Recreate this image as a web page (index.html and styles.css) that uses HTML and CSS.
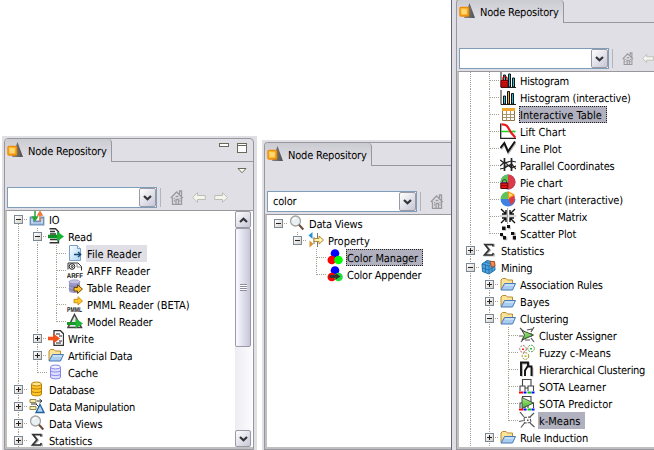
FILE: index.html
```html
<!DOCTYPE html>
<html lang="en">
<head>
<meta charset="utf-8">
<title>Node Repository</title>
<link rel="stylesheet" href="styles.css">
</head>
<body>
<svg class="defs" aria-hidden="true">
<defs>
<linearGradient id="gOrange" x1="0" y1="0" x2="1" y2="1"><stop offset="0" stop-color="#ffd95a"/><stop offset="1" stop-color="#f59a12"/></linearGradient>
<linearGradient id="gGray" x1="0" y1="0" x2="1" y2="0"><stop offset="0" stop-color="#8a8a8a"/><stop offset="1" stop-color="#4e4e4e"/></linearGradient>
<linearGradient id="gDoc" x1="0" y1="0" x2="1" y2="1"><stop offset="0" stop-color="#fff"/><stop offset="1" stop-color="#a9d2f4"/></linearGradient>
<linearGradient id="gGreen" x1="0" y1="0" x2="0" y2="1"><stop offset="0" stop-color="#b6f08c"/><stop offset="1" stop-color="#3cae2c"/></linearGradient>
<symbol id="knime" viewBox="0 0 16 16"><path d="M10.500 0 16 15H5Z" fill="url(#gGray)"/><rect x="1" y="4.500" width="8.500" height="8.500" rx="1" fill="url(#gOrange)" stroke="#f08a00" stroke-width="1.400"/><rect x="2.800" y="6.300" width="5" height="5" fill="#ffd873"/></symbol>
<symbol id="home" viewBox="0 0 14 15"><path d="M.8 8 6.500 2 12.800 8M2.500 7.500v7h9v-7M9.500 4V1h2v5M6 14V9.500h2.500V14M4 8.500h1M9.500 8.500h1M5.500 6.500h3M4 11h1M9.500 11h1" fill="none" stroke="#9a9a9e" stroke-width="1.300"/></symbol>
<symbol id="back" viewBox="0 0 14 11"><path d="M.7 5.500 5.500.7v2.800h7.800v4H5.500v2.800Z" fill="#f5f5ee" stroke="#bcbcb6"/></symbol>
<symbol id="fwd" viewBox="0 0 14 11"><path d="M13.300 5.500 8.500.7v2.800H.7v4h7.800v2.800Z" fill="#f5f5ee" stroke="#bcbcb6"/></symbol>
<symbol id="chev" viewBox="0 0 9 6"><path d="M1 1 4.500 4.300 8 1" fill="none" stroke="#33333b" stroke-width="2.200"/></symbol>
<symbol id="io" viewBox="0 0 16 16"><path d="M4 6.500H1.500v7h13v-7H12M4.500 6.500v4h7v-4" fill="none" stroke="#6e93bd" stroke-width="1.800"/><path d="M2 12.500h12" stroke="#a8c4e4" stroke-width="1.500"/><path d="M6 0v8M3.800 6 6 9.300 8.200 6Z" stroke="#27a536" stroke-width="1.500" fill="#27a536"/><path d="M11 10V3M9 4 11 .8 13 4Z" stroke="#f0763a" stroke-width="1.500" fill="#f0763a"/></symbol>
<symbol id="read" viewBox="0 0 16 16"><path d="M1.500.8h6l3 3v11h-9M2 3.500h5M2 6h6M2 11.500h7" fill="none" stroke="#333" stroke-width="1.400"/><path d="M0 8.500h9" stroke="#0d8f22" stroke-width="3.500"/><path d="M9 3.200 16 8.500 9 13.800Z" fill="#19b532"/></symbol>
<symbol id="write" viewBox="0 0 16 16"><path d="M6 .7h6.500l3 3V15.300H6Z" fill="#fff" stroke="#333" stroke-width="1.300"/><path d="M8 4h4M11 6h3M11 11h3M8 13h5" stroke="#222"/><path d="M0 8.500h6" stroke="#f2511b" stroke-width="3.600"/><path d="M5.500 3.500 12 8.500 5.500 13.500Z" fill="#f2511b"/></symbol>
<symbol id="file" viewBox="0 0 16 16"><path d="M2.500.5h8l3 3v12h-11Z" fill="url(#gDoc)" stroke="#7c9fc8"/><path d="M10.500.5v3h3" fill="#fff" stroke="#7c9fc8"/><path d="M7 9.500h6M11 7l2.800 2.500L11 12" fill="none" stroke="#174a73" stroke-width="1.300"/></symbol>
<symbol id="arff" viewBox="0 0 16 16"><path d="M1 7.500V1h10l3.500 3.500v4" fill="#fff" stroke="#333"/><circle cx="5" cy="4.500" r="2.800" fill="#fff" stroke="#222"/><circle cx="5.200" cy="4.500" r="1" fill="none" stroke="#222"/><path d="M10 1.500v3.500h4" fill="none" stroke="#888"/><text x="-.2" y="15.800" class="tiny" textLength="16.200" lengthAdjust="spacingAndGlyphs">ARFF</text></symbol>
<symbol id="table" viewBox="0 0 16 16"><path d="M2 2.500v9.500c0 2.500 11 2.500 11 0V2.500Z" fill="#9a9ac6"/><ellipse cx="7.500" cy="2.800" rx="5.500" ry="2" fill="#c3c3e2" stroke="#8585b4" stroke-width=".6"/><path d="M2 6c0 2 11 2 11 0M2 9.500c0 2 11 2 11 0" fill="none" stroke="#8080b0"/><path d="M7 8.500h3.500V5.800L15.500 10l-5 4.500V12H7Z" fill="#ffc12a" stroke="#5d3b05" stroke-width=".9"/></symbol>
<symbol id="pmml" viewBox="0 0 16 16"><path d="M7 3.300h4V.8L15.500 5 11 9V6.800H7Z" fill="#ffc62b" stroke="#c98a06" stroke-width=".9"/><text x="0" y="15.500" class="tiny" textLength="15" lengthAdjust="spacingAndGlyphs">PMML</text></symbol>
<symbol id="model" viewBox="0 0 16 16"><path d="M7.500 1.500 14.500 14.500H1Z" fill="#e6e6e6" stroke="#444" stroke-width="1.500"/><path d="M0 10.500h9" stroke="#159a2a" stroke-width="3"/><path d="M8.500 5.500 16 10.500 8.500 15.500Z" fill="#1fb436"/></symbol>
<symbol id="folder" viewBox="0 0 16 16"><path d="M1 13.500V4L2.500 2.500H6L7.500 4H12.500V8" fill="#fce39a" stroke="#b98a2e"/><path d="M1 14 4.500 7.500H15.500L12.500 14Z" fill="#a9ccf0" stroke="#4779b5"/><path d="M5 9h9" stroke="#e4f1ff"/></symbol>
<symbol id="cache" viewBox="0 0 16 16"><path d="M2.500 3v10c0 2.500 10 2.500 10 0V3" fill="#e0e0ff" stroke="#8484ee"/><ellipse cx="7.500" cy="3" rx="5" ry="2" fill="#f2f2ff" stroke="#8484ee"/><path d="M2.500 6.500c0 2 10 2 10 0M2.500 10c0 2 10 2 10 0" fill="none" stroke="#8484ee"/></symbol>
<symbol id="db" viewBox="0 0 16 16"><path d="M2.500 3v10c0 2.500 10 2.500 10 0V3" fill="#ffc629" stroke="#b97d04"/><ellipse cx="7.500" cy="3" rx="5" ry="2" fill="#ffe68e" stroke="#b97d04"/><path d="M2.500 6.500c0 2 10 2 10 0M2.500 10c0 2 10 2 10 0" fill="none" stroke="#b97d04"/></symbol>
<symbol id="manip" viewBox="0 0 16 16"><path d="M1 1.500h6v3H1ZM1 8.500h6v3H1Z" fill="#f8edb0" stroke="#96884c"/><path d="M8 3h4M10.500 1l2.500 2-2.500 2M7 6l4 4M2 6h6" fill="none" stroke="#333"/><path d="M11 6.500 15 14.500H7Z" fill="#b4d5f2" stroke="#1f5f9c" stroke-width="1.300"/></symbol>
<symbol id="views" viewBox="0 0 16 16"><circle cx="6.500" cy="6" r="5" fill="#e9f0f3" stroke="#a3a3a3" stroke-width="1.300"/><path d="M4 5a3 3 0 0 1 3-2" fill="none" stroke="#fff" stroke-width="1.500"/><path d="M10 9.800 14.300 14.500" stroke="#6b4a3a" stroke-width="2"/></symbol>
<symbol id="stats" viewBox="0 0 16 16"><path d="M13 5V3H4.500L9 8.300 4.500 13.500H13V11.500" fill="none" stroke="#bbb" stroke-width="2"/><path d="M11.800 4.500V2.500H4L8 7.700 3.500 13H11.500l.8-2" fill="none" stroke="#333" stroke-width="1.700"/></symbol>
<symbol id="prop" viewBox="0 0 16 16"><path d="M4.500 0v7L.5 3.500Z" fill="#2494cf"/><path d="M1.500 8.500v7l4-3.500Z" fill="#d89429"/><path d="M9.500 1v14M6 5v7" stroke="#777"/><path d="M6 6.500h5V4l4.500 4L11 12V9.500H6Z" fill="#fff1ba" stroke="#b98a2e"/></symbol>
<symbol id="color" viewBox="0 0 16 16"><circle cx="8" cy="4.500" r="4.300" fill="#00f"/><circle cx="4.800" cy="11" r="4.300" fill="#f00"/><circle cx="11.500" cy="11" r="4.300" fill="#0f0"/></symbol>
<symbol id="append" viewBox="0 0 16 16"><circle cx="8" cy="4.500" r="4.300" fill="#00f"/><circle cx="4.800" cy="11" r="4.300" fill="#f00"/><circle cx="11.500" cy="11" r="4.300" fill="#1fe03a"/><path d="M2.500 9h6V7l5 3.500-5 3.300V12h-6Z" fill="#333"/></symbol>
<symbol id="hist" viewBox="0 0 16 16"><path d="M1 0v15.500h15" fill="none" stroke="#222"/><path d="M3.500 3h2v12h-2ZM8.500 2h2v13h-2ZM12.500 6h2v9h-2Z" fill="#1cc8d8" stroke="#111"/><path d="M3 8V6.500C3 4 7 4 7 6.500V8" fill="none" stroke="#b00" stroke-width="1.300"/><path d="M1 8.500h7v6.500H1Z" fill="#e01818" stroke="#700"/><path d="M1 10.800h7M1 13h7" stroke="#900"/></symbol>
<symbol id="histi" viewBox="0 0 16 16"><path d="M1 1v14.500h15" fill="none" stroke="#222"/><path d="M3.500 7h2v8h-2Z" fill="#1cc8d8" stroke="#111"/><path d="M7.500 2.500h2V15h-2Z" fill="#f5a623" stroke="#111"/><path d="M11.500 4.500h2V15h-2Z" fill="#1cc8d8" stroke="#111"/></symbol>
<symbol id="itable" viewBox="0 0 16 16"><path d="M2.500 2.500h12v12h-12Z" fill="#fff" stroke="#8f7440"/><path d="M2 2h13v3H2Z" fill="#f2a62c"/><path d="M2.500 8.500h12M2.500 11.500h12M6.500 5v9.500M10.500 5v9.500" stroke="#a8936a"/></symbol>
<symbol id="lift" viewBox="0 0 16 16"><path d="M.7.5v15H16" fill="none" stroke="#222" stroke-width="1.300"/><path d="M1 8.500h14.500" stroke="#26cc26" stroke-width="1.700"/><path d="M1.500 1.300C8 1 8 5 11 9.500L15.300 14.500" fill="none" stroke="#f01818" stroke-width="2.200"/></symbol>
<symbol id="line" viewBox="0 0 16 16"><path d="M1 9 4.500 4 8.500 12.500 15.500 2.500" fill="none" stroke="#bbb" stroke-width="2.500"/><path d="M.5 8 4.300 3 8 11.500 15 1.500" fill="none" stroke="#111" stroke-width="1.900"/></symbol>
<symbol id="par" viewBox="0 0 16 16"><path d="M4.500 1v13M11.500 1v13" stroke="#222" stroke-width="1.700"/><path d="M0 3 4.500 6 11.500 4 16 5M0 9 4.500 5 11.500 11 16 9M0 12 4.500 11 11.500 7 16 12M4 9h8" fill="none" stroke="#222" stroke-width="1.200"/></symbol>
<symbol id="pie" viewBox="0 0 16 16"><circle cx="8" cy="8" r="7.500" fill="#4b7fdc"/><path d="M8 8V.5A7.500 7.500 0 0 0 .5 8Z" fill="#5fc35a"/><path d="M8 .5a7.500 7.500 0 0 1 0 15Z" fill="#da3b45"/><path d="M2.500 8.500V7.500c0-2.500 4-2.500 4 0V9" fill="none" stroke="#333"/><path d="M.8 9h7v5.500h-7Z" fill="#e01818" stroke="#600"/><path d="M1 11.700h6.500" stroke="#900"/></symbol>
<symbol id="piei" viewBox="0 0 16 16"><path d="M.5 8a7.500 7.500 0 0 0 15 0Z" fill="#3f80e4"/><path d="M8 8V.5A7.500 7.500 0 0 0 .5 8Z" fill="#5fc35a"/><path d="M8.500 8 13 2.500A7.500 7.500 0 0 1 11 14Z" fill="#da3b45"/><path d="M8.500 7V1L14 4Z" fill="#ffe08a" stroke="#f39a12" stroke-width="1.200"/></symbol>
<symbol id="smat" viewBox="0 0 16 16"><path d="M7.500 0v16M0 8h16" stroke="#999" stroke-width=".8"/><path d="M1 1 6 6M6 2v4H2M15 1 10 6M10 2v4h4M1 15 6 10M2 10h4v4M15 15 10 10M14 10h-4v4" fill="none" stroke="#111" stroke-width="1.400"/></symbol>
<symbol id="splot" viewBox="0 0 16 16"><path d="M2 1.500h3.500v3.500H2ZM7 .5h3v3H7ZM0 9h3v2.500H0ZM3 11h3.500v3.500H3ZM12 7h3v3h-3ZM13 11h2.500v3.500H13Z" fill="#bbb" transform="translate(.8 .8)"/><path d="M2 1.500h3.500v3.500H2ZM7 0h3v3H7ZM0 8h3v3H0ZM3 11h3v3.500H3ZM11 7h3.300v3H11ZM12.800 11H16v3.500h-3.200Z" fill="#111"/></symbol>
<symbol id="mining" viewBox="0 0 16 16"><path d="M1 5 6 1.500 13.500 3 14 11 8 15 1.500 12.500Z" fill="#4ea3dc" stroke="#226fa8"/><path d="M1 5 8 7 13.500 3M8 7v8M1 8.800 8 11l6-4M4.500 6v7.500M11 5v8M4 3l7 2" fill="none" stroke="#226fa8" stroke-width=".9"/><path d="M9 2.500 13.500 2.500 14 7 10.500 8Z" fill="#f28a4e" stroke="#b24b19" stroke-width=".8"/></symbol>
<symbol id="assign" viewBox="0 0 16 16"><path d="M1 1 5 5M8 3 13 2M15 0 12 5M0 9h4M2 15 5 11M15 15 12 11M6 13h5M12 6v4" stroke="#555" stroke-width="1.200"/><path d="M3 3.500 14.500 8 3 13 5.500 8Z" fill="url(#gGreen)" stroke="#333" stroke-width=".9"/></symbol>
<symbol id="fuzzy" viewBox="0 0 16 16"><g fill="none" stroke-dasharray="2 1"><circle cx="4" cy="5" r="3.300" stroke="#b06060"/><circle cx="12" cy="4.500" r="3.300" stroke="#5a9a50"/><circle cx="6.500" cy="12" r="3.300" stroke="#8a8a30"/></g><path d="M3 4.500h2v1.500H3Z" fill="#f22"/><path d="M11 4h2v1.500h-2Z" fill="#2c2"/><path d="M5.500 11.500h2V13h-2Z" fill="#bb0"/></symbol>
<symbol id="hier" viewBox="0 0 16 16"><path d="M3 15.500V2.500H10V6M13.500 15.500V6.500" fill="none" stroke="#aaa" stroke-width="1.800"/><path d="M2 15V1.500H9V5.500M6 15V9.500L8.500 5.500H12.500V15" fill="none" stroke="#111" stroke-width="1.900"/></symbol>
<symbol id="sota" viewBox="0 0 16 16"><path d="M3.500 5V1.500H12V5M1 13V8h5v5M3.500 8V5M9 13V8h5.500v5M12 8V4M6 10h3" fill="none" stroke="#444" stroke-width="1.100"/><path d="M0 13.500h4v2H0Z" fill="#f00"/><path d="M4.500 13.500h3v2h-3ZM12.500 13.500h3v2h-3Z" fill="#00f"/><path d="M8.500 13.500h3.500v2H8.500Z" fill="#0c0"/></symbol>
<symbol id="sotap" viewBox="0 0 16 16"><use href="#sota"/><path d="M3 2.500 14.500 8 3 13.500Z" fill="url(#gGreen)" stroke="#333" stroke-width=".8"/></symbol>
<symbol id="kmeans" viewBox="0 0 16 16"><path d="M1 0 5 5M15 1 11 5M0 9.500 4.500 8.500M2 15.500 5.500 11M15.500 15 11 11" stroke="#555" stroke-width="1.200" fill="none"/><path d="M5 5.500 11 5 12 10.500 5.500 11Z" fill="none" stroke="#555" stroke-width="1.100" stroke-dasharray="3 1"/><path d="M8 7.500h1.500V9H8Z" fill="#555"/></symbol>
</defs>
</svg>

<section class="panel left">
 <div class="view">
  <header class="tabs"><div class="tab"><svg class="ico"><use href="#knime"/></svg><span>Node Repository</span></div>
   <div class="strip"><i class="min"></i><i class="max"></i></div></header>
  <div class="tools">
   <div class="menu"><svg class="tri" viewBox="0 0 10 6"><path d="M1 .5H9L5 4.700Z" fill="#fff" stroke="#6b6a58"/></svg></div>
   <div class="bar"><div class="combo"><span></span><b><svg><use href="#chev"/></svg></b></div><i class="sep"></i><svg class="home"><use href="#home"/></svg><svg class="arrow"><use href="#back"/></svg><svg class="arrow"><use href="#fwd"/></svg></div>
  </div>
  <div class="content">
   <ul class="tree">
    <li><i class="g s x minus"></i><svg class="ico"><use href="#io"/></svg><span>IO</span></li>
    <li><i class="g v"></i><i class="g t x minus"></i><svg class="ico"><use href="#read"/></svg><span>Read</span></li>
    <li><i class="g v"></i><i class="g v"></i><i class="g t"></i><svg class="ico"><use href="#file"/></svg><span class="soft loose">File Reader</span></li>
    <li><i class="g v"></i><i class="g v"></i><i class="g t"></i><svg class="ico"><use href="#arff"/></svg><span class="loose">ARFF Reader</span></li>
    <li><i class="g v"></i><i class="g v"></i><i class="g t"></i><svg class="ico"><use href="#table"/></svg><span class="loose">Table Reader</span></li>
    <li><i class="g v"></i><i class="g v"></i><i class="g t"></i><svg class="ico"><use href="#pmml"/></svg><span class="loose">PMML Reader (BETA)</span></li>
    <li><i class="g v"></i><i class="g v"></i><i class="g e"></i><svg class="ico"><use href="#model"/></svg><span>Model Reader</span></li>
    <li><i class="g v"></i><i class="g t x plus"></i><svg class="ico"><use href="#write"/></svg><span class="loose">Write</span></li>
    <li><i class="g v"></i><i class="g t x plus"></i><svg class="ico"><use href="#folder"/></svg><span>Artificial Data</span></li>
    <li><i class="g v"></i><i class="g e"></i><svg class="ico"><use href="#cache"/></svg><span>Cache</span></li>
    <li><i class="g t x plus"></i><svg class="ico"><use href="#db"/></svg><span>Database</span></li>
    <li><i class="g t x plus"></i><svg class="ico"><use href="#manip"/></svg><span class="tight">Data Manipulation</span></li>
    <li><i class="g t x plus"></i><svg class="ico"><use href="#views"/></svg><span>Data Views</span></li>
    <li><i class="g t x plus"></i><svg class="ico"><use href="#stats"/></svg><span>Statistics</span></li>
   </ul>
   <div class="scroll"><b><svg class="up"><use href="#chev"/></svg></b><div class="thumb"><i></i></div><b class="end"><svg><use href="#chev"/></svg></b></div>
  </div>
 </div>
</section>

<section class="panel middle">
 <div class="view">
  <header class="tabs"><div class="tab"><svg class="ico"><use href="#knime"/></svg><span>Node Repository</span></div><div class="strip"></div></header>
  <div class="tools">
   <div class="menu"></div>
   <div class="bar"><div class="combo"><span>color</span><b><svg><use href="#chev"/></svg></b></div><i class="sep"></i><svg class="home"><use href="#home"/></svg></div>
  </div>
  <div class="content">
   <ul class="tree">
    <li><i class="g x minus"></i><svg class="ico"><use href="#views"/></svg><span>Data Views</span></li>
    <li><i class="g"></i><i class="g e x minus"></i><svg class="ico"><use href="#prop"/></svg><span class="loose">Property</span></li>
    <li><i class="g"></i><i class="g"></i><i class="g t"></i><svg class="ico"><use href="#color"/></svg><span class="sel focus mid">Color Manager</span></li>
    <li><i class="g"></i><i class="g"></i><i class="g e"></i><svg class="ico"><use href="#append"/></svg><span>Color Appender</span></li>
   </ul>
  </div>
 </div>
</section>

<section class="panel right">
 <div class="view">
  <header class="tabs"><div class="tab"><svg class="ico"><use href="#knime"/></svg><span>Node Repository</span></div><div class="strip"></div></header>
  <div class="tools">
   <div class="menu"></div>
   <div class="bar"><div class="combo"><span></span><b><svg><use href="#chev"/></svg></b></div><i class="sep"></i><svg class="home"><use href="#home"/></svg><svg class="arrow"><use href="#back"/></svg></div>
  </div>
  <div class="content">
   <ul class="tree">
    <li><i class="g v"></i><i class="g t"></i><svg class="ico"><use href="#hist"/></svg><span class="tight">Histogram</span></li>
    <li><i class="g v"></i><i class="g t"></i><svg class="ico"><use href="#histi"/></svg><span>Histogram (interactive)</span></li>
    <li><i class="g v"></i><i class="g t"></i><svg class="ico"><use href="#itable"/></svg><span class="sel focus loose">Interactive Table</span></li>
    <li><i class="g v"></i><i class="g t"></i><svg class="ico"><use href="#lift"/></svg><span class="loose">Lift Chart</span></li>
    <li><i class="g v"></i><i class="g t"></i><svg class="ico"><use href="#line"/></svg><span class="mid">Line Plot</span></li>
    <li><i class="g v"></i><i class="g t"></i><svg class="ico"><use href="#par"/></svg><span>Parallel Coordinates</span></li>
    <li><i class="g v"></i><i class="g t"></i><svg class="ico"><use href="#pie"/></svg><span class="mid">Pie chart</span></li>
    <li><i class="g v"></i><i class="g t"></i><svg class="ico"><use href="#piei"/></svg><span>Pie chart (interactive)</span></li>
    <li><i class="g v"></i><i class="g t"></i><svg class="ico"><use href="#smat"/></svg><span>Scatter Matrix</span></li>
    <li><i class="g v"></i><i class="g e"></i><svg class="ico"><use href="#splot"/></svg><span class="mid">Scatter Plot</span></li>
    <li><i class="g t x plus"></i><svg class="ico"><use href="#stats"/></svg><span>Statistics</span></li>
    <li><i class="g t x minus"></i><svg class="ico"><use href="#mining"/></svg><span class="tight">Mining</span></li>
    <li><i class="g v"></i><i class="g t x plus"></i><svg class="ico"><use href="#folder"/></svg><span>Association Rules</span></li>
    <li><i class="g v"></i><i class="g t x plus"></i><svg class="ico"><use href="#folder"/></svg><span class="mid">Bayes</span></li>
    <li><i class="g v"></i><i class="g t x minus"></i><svg class="ico"><use href="#folder"/></svg><span>Clustering</span></li>
    <li><i class="g v"></i><i class="g v"></i><i class="g t"></i><svg class="ico"><use href="#assign"/></svg><span>Cluster Assigner</span></li>
    <li><i class="g v"></i><i class="g v"></i><i class="g t"></i><svg class="ico"><use href="#fuzzy"/></svg><span class="loose">Fuzzy c-Means</span></li>
    <li><i class="g v"></i><i class="g v"></i><i class="g t"></i><svg class="ico"><use href="#hier"/></svg><span class="tight">Hierarchical Clustering</span></li>
    <li><i class="g v"></i><i class="g v"></i><i class="g t"></i><svg class="ico"><use href="#sota"/></svg><span class="loose">SOTA Learner</span></li>
    <li><i class="g v"></i><i class="g v"></i><i class="g t"></i><svg class="ico"><use href="#sotap"/></svg><span class="loose">SOTA Predictor</span></li>
    <li><i class="g v"></i><i class="g v"></i><i class="g e"></i><svg class="ico"><use href="#kmeans"/></svg><span class="sel loose">k-Means</span></li>
    <li><i class="g v"></i><i class="g t x plus"></i><svg class="ico"><use href="#folder"/></svg><span>Rule Induction</span></li>
   </ul>
  </div>
 </div>
</section>
</body>
</html>
```
FILE: styles.css
```css
* { box-sizing: border-box; }
html, body { margin: 0; height: 450px; overflow: hidden; }
body {
  display: flex;
  width: 654px;
  padding-left: 2px;
  background: #fff;
  color: #000;
  font: 11px/17px "DejaVu Sans Condensed", "DejaVu Sans", sans-serif;
  font-stretch: condensed;
  letter-spacing: -.2px;
  text-rendering: geometricPrecision;
}
.defs { position: absolute; width: 0; height: 0; }
.tiny { font: bold 7px "Liberation Sans", sans-serif; fill: #111; letter-spacing: 0; }
.loose { letter-spacing: 0; }
.mid { letter-spacing: -.1px; }
.tight { letter-spacing: -.28px; }

.panel { display: flex; background: #e0dfe5; flex: none; }
.left { width: 255px; margin-top: 136px; padding: 2px 3px 0 2px; }
.middle { width: 189px; margin: 140px 0 0 5px; padding: 2px 0 0 2px; }
.right { width: 203px; padding-left: 4px; border-left: 1px solid #66667c; }
.right .view { margin-top: -1px; }

.view {
  display: flex;
  flex-direction: column;
  flex: 1;
  min-width: 0;
  overflow: hidden;
  border: 1px solid #98989c;
  border-right: 0;
  border-top-left-radius: 4px;
}
.left .view { border-right: 1px solid #98989c; border-top-right-radius: 4px; }
.tabs { display: flex; height: 23px; flex: none; }
.tab {
  display: flex;
  align-items: center;
  width: 107px;
  padding: 1px 0 0 2px;
  gap: 5px;
  border-right: 1px solid #98989c;
  border-top-right-radius: 4px;
  background: linear-gradient(#cbcbd2, #e0dfe5 80%);
  white-space: nowrap;
}
.tab .ico { width: 16px; height: 16px; margin-top: -2px; }
.strip { flex: 1; display: flex; gap: 8px; justify-content: flex-end; padding: 4px 6px 0 0; border-bottom: 1px solid #98989c; }
.min { width: 10px; height: 4px; border: 1px solid #6b6a58; background: #fff; }
.max { width: 10px; height: 10px; border: 1px solid #6b6a58; background: linear-gradient(#fff 1px, #6b6a58 1px, #6b6a58 2px, #fff 2px); }

.tools { height: 48px; flex: none; display: flex; flex-direction: column; }
.menu { height: 25px; display: flex; justify-content: flex-end; padding: 6px 6px 0 0; }
.tri { width: 10px; height: 6px; }
.bar { display: flex; align-items: center; height: 21px; padding-left: 2px; }
.combo { display: flex; width: 150px; height: 21px; border: 1px solid #7f9db9; background: #fff; flex: none; }
.combo span { flex: 1; padding: 1px 0 0 5px; }
.combo b, .scroll b {
  display: flex;
  align-items: center;
  justify-content: center;
  width: 17px;
  border: 1px solid #9a9aa6;
  border-radius: 2px;
  background: linear-gradient(135deg, #fff, #c6c6d6);
}
.combo b svg, .scroll b svg { width: 9px; height: 6px; }
.scroll b .up { transform: rotate(180deg); }
.sep { width: 1px; height: 19px; margin: 0 9px 0 3px; background: #b4b4bc; }
.home { width: 14px; height: 15px; }
.arrow { width: 14px; height: 11px; margin-left: 8px; }

.content {
  display: flex;
  flex: 1;
  min-height: 0;
  border-top: 1px solid #98989c;
  border-left: 2px solid #c0c0c0;
  border-bottom: 2px solid #c0c0c0;
  background: #fff;
}
.tree { flex: 1; margin: 0; padding: 0 0 0 2px; list-style: none; overflow: hidden; }
.tree li { display: flex; height: 17px; white-space: nowrap; }
.tree .ico { width: 16px; height: 16px; margin-left: 1px; flex: none; }
.tree span { margin-left: 3px; padding: 0 5px 0 1px; height: 17px; line-height: 19px; }
.tree .soft { background: #e0dfe5; }
.tree .sel { background: #b0b0be; }
.tree .focus { outline: 1px dotted #222; outline-offset: -1px; }

.g { width: 19px; height: 17px; flex: none; position: relative; }
.g::before, .g::after { content: ""; position: absolute; }
.v::before, .t::before, .e::before, .s::before {
  left: 9px; top: 0; width: 1px; height: 17px;
  background: repeating-linear-gradient(#a5a393 0 1px, transparent 1px 2px);
}
.e::before { height: 9px; }
.s::before { top: 9px; height: 8px; }
.t::after, .e::after, .s::after {
  left: 10px; top: 8px; width: 9px; height: 1px;
  background: repeating-linear-gradient(90deg, #a5a393 0 1px, transparent 1px 2px);
}
.x { --box: linear-gradient(#7c8896, #7c8896); }
.x::after {
  left: 5px; top: 4px; width: 14px; height: 9px;
  background:
    linear-gradient(#222, #222) 2px 4px / 5px 1px no-repeat,
    linear-gradient(#222, #222) 4px 2px / 1px 5px no-repeat,
    linear-gradient(135deg, #fff, #d5d2ca) 1px 1px / 7px 7px no-repeat,
    var(--box) 0 0 / 9px 9px no-repeat,
    repeating-linear-gradient(90deg, transparent 0 1px, #a5a393 1px 2px) 9px 4px / 5px 1px no-repeat;
}
.x.minus::after {
  background:
    linear-gradient(#222, #222) 2px 4px / 5px 1px no-repeat,
    linear-gradient(135deg, #fff, #d5d2ca) 1px 1px / 7px 7px no-repeat,
    var(--box) 0 0 / 9px 9px no-repeat,
    repeating-linear-gradient(90deg, transparent 0 1px, #a5a393 1px 2px) 9px 4px / 5px 1px no-repeat;
}

.scroll { display: flex; flex-direction: column; width: 17px; margin-right: 1px; background: linear-gradient(90deg, #ececf2, #fcfcff); }
.scroll b { height: 17px; width: 16px; flex: none; }
.thumb {
  display: flex;
  align-items: center;
  justify-content: center;
  width: 16px;
  height: 119px;
  border: 1px solid #9a9aa6;
  border-radius: 2px;
  background: linear-gradient(90deg, #fafaff, #c6c6d8);
}
.thumb i { width: 7px; height: 7px; background: repeating-linear-gradient(#8e8e9e 0 1px, #fff 1px 2px); }
.end { margin-top: auto; }
```
